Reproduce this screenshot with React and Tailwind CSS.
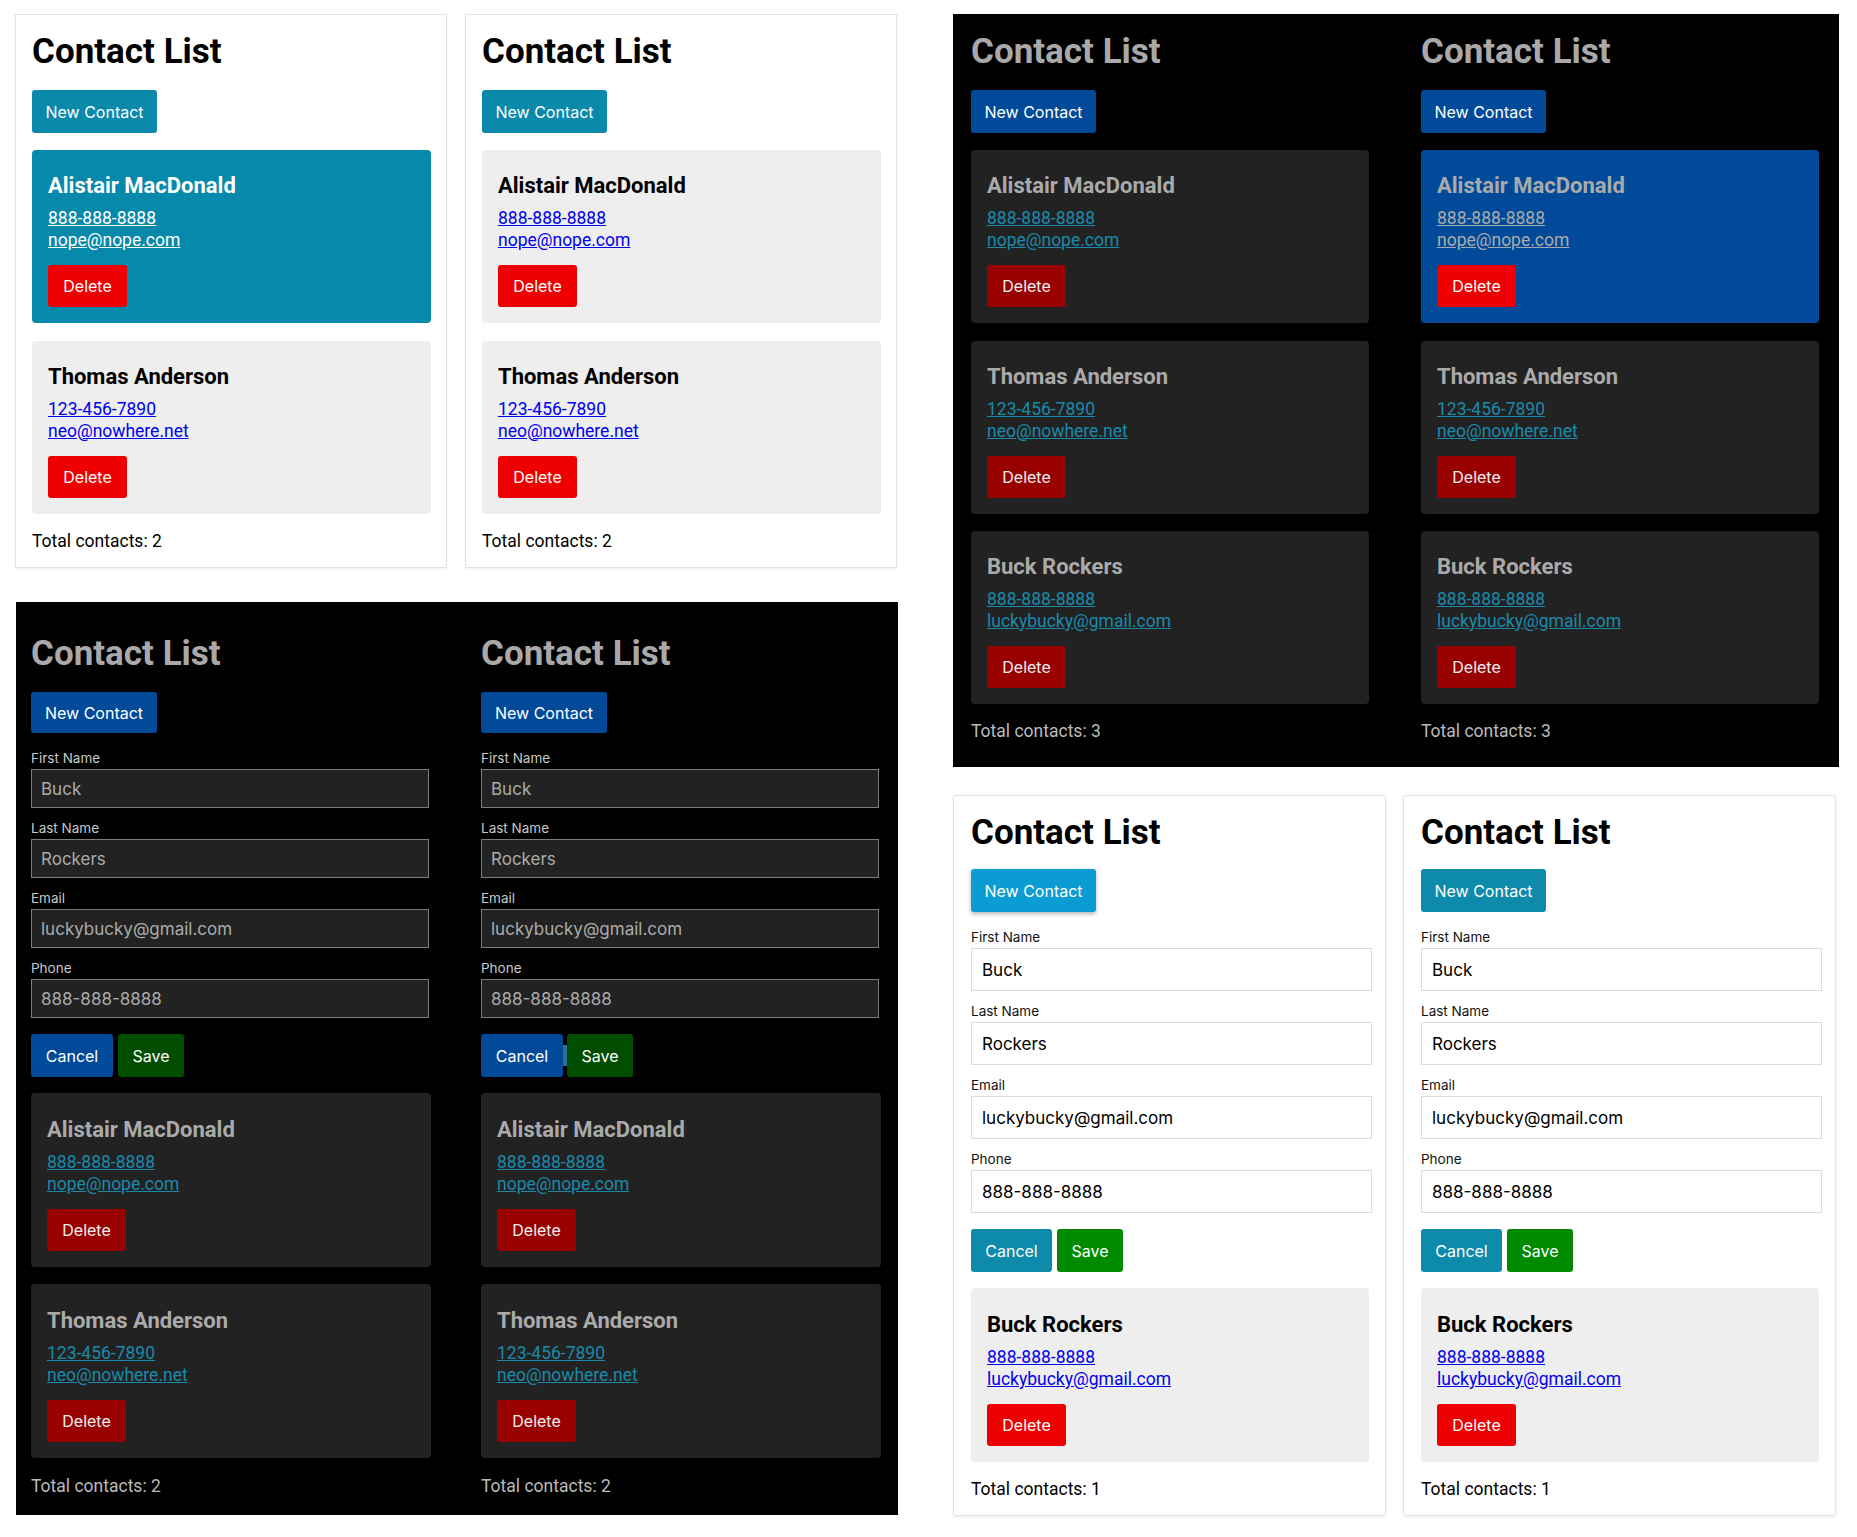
import React from 'react';

// 연락처 목록 화면 네 가지 상태를 한 장에 모아 보여주는 비교 화면
const ALISTAIR = { name: 'Alistair MacDonald', phone: '888-888-8888', email: 'nope@nope.com' };
const THOMAS = { name: 'Thomas Anderson', phone: '123-456-7890', email: 'neo@nowhere.net' };
const BUCK = { name: 'Buck Rockers', phone: '888-888-8888', email: 'luckybucky@gmail.com' };

// 1. 밝은 테마 목록 (왼쪽 위)
const lightList = {
  heading: 'text-[35px] leading-[42px] font-bold text-black',
  newBtn: "mt-[17px] flex items-center justify-center w-[125px] h-[43px] rounded-[3px] bg-[#0b89ab] text-white font-['Inter',sans-serif] text-[16px]",
  list: 'mt-[17px] flex flex-col gap-[17.5px]',
  card: 'w-[399px] rounded-[4px] pl-4 pt-[23px] pb-[16px] flex flex-col items-start bg-[#eeeeee]',
  cardSel: 'w-[399px] rounded-[4px] pl-4 pt-[23px] pb-[16px] flex flex-col items-start bg-[#0789ab]',
  name: 'text-[22px] leading-[25px] font-bold text-black',
  nameSel: 'text-[22px] leading-[25px] font-bold text-white',
  links: 'mt-[9px] flex flex-col items-start text-[17.5px] leading-[22px]',
  link: 'text-[#0000ee] underline',
  linkSel: 'text-white underline',
  del: "mt-[14px] flex items-center justify-center w-[79px] h-[42px] rounded-[3px] bg-[#ee0000] text-white font-['Inter',sans-serif] text-[16px]",
  delSel: "mt-[14px] flex items-center justify-center w-[79px] h-[42px] rounded-[3px] bg-[#ee0000] text-white font-['Inter',sans-serif] text-[16px]",
  total: 'mt-[17px] text-[17.5px] leading-[20px] text-black',
};

// 2. 어두운 테마 (오른쪽 위)
const darkList = {
  heading: 'text-[35px] leading-[42px] font-bold text-[#a9a9a9]',
  newBtn: "mt-[17px] flex items-center justify-center w-[125px] h-[43px] rounded-[3px] bg-[#004a99] text-white font-['Inter',sans-serif] text-[16px]",
  list: 'mt-[17px] flex flex-col gap-[17.5px]',
  card: 'w-[398px] rounded-[4px] pl-4 pt-[23px] pb-[16px] flex flex-col items-start bg-[#222222]',
  cardSel: 'w-[398px] rounded-[4px] pl-4 pt-[23px] pb-[16px] flex flex-col items-start bg-[#004a99]',
  name: 'text-[22px] leading-[25px] font-bold text-[#aaaaaa]',
  nameSel: 'text-[22px] leading-[25px] font-bold text-[#aaaaaa]',
  links: 'mt-[9px] flex flex-col items-start text-[17.5px] leading-[22px]',
  link: 'text-[#1a8aab] underline',
  linkSel: 'text-[#aaaaaa] underline',
  del: "mt-[14px] flex items-center justify-center w-[79px] h-[42px] rounded-[3px] bg-[#990000] text-[#f0f0f0] font-['Inter',sans-serif] text-[16px]",
  delSel: "mt-[14px] flex items-center justify-center w-[79px] h-[42px] rounded-[3px] bg-[#ee0000] text-white font-['Inter',sans-serif] text-[16px]",
  total: 'mt-[17px] text-[17.5px] leading-[20px] text-[#bbbbbb]',
};

// 3. 어두운 테마 + 입력 폼 (왼쪽 아래)
const darkForm = {
  ...darkList,
  newBtn: "mt-[17px] flex items-center justify-center w-[126px] h-[41px] rounded-[3px] bg-[#004a99] text-white font-['Inter',sans-serif] text-[16px]",
  list: 'mt-[16px] flex flex-col gap-[17px]',
  card: 'w-[400px] rounded-[4px] pl-4 pt-[24px] pb-[16px] flex flex-col items-start bg-[#222222]',
  total: 'mt-[18px] text-[17.5px] leading-[20px] text-[#bbbbbb]',
  form: 'mt-[17px] flex flex-col gap-[12px]',
  label: "block font-['Inter',sans-serif] text-[13.5px] leading-[16px] text-[#c8c8c8]",
  input: "mt-[3px] block w-[398px] h-[39px] border border-[#7d7d7d] bg-[#222222] px-[9px] font-['Inter',sans-serif] text-[17px] text-[#ababab] outline-none",
  cancel: "flex items-center justify-center w-[82px] h-[43px] rounded-[3px] bg-[#004a99] text-white font-['Inter',sans-serif] text-[16px]",
  save: "flex items-center justify-center w-[66px] h-[43px] rounded-[3px] bg-[#004d00] text-white font-['Inter',sans-serif] text-[16px]",
};

// 4. 밝은 테마 + 입력 폼 (오른쪽 아래)
const lightForm = {
  ...lightList,
  newBtn: "mt-[15px] flex items-center justify-center w-[125px] h-[43px] rounded-[3px] bg-[#0e8aab] text-white font-['Inter',sans-serif] text-[16px]",
  list: 'mt-[16px] flex flex-col gap-[17px]',
  card: 'w-[398px] rounded-[4px] pl-4 pt-[24px] pb-[16px] flex flex-col items-start bg-[#eeeeee]',
  form: 'mt-[17px] flex flex-col gap-[12px]',
  label: "block font-['Inter',sans-serif] text-[13.5px] leading-[16px] text-[#111111]",
  input: "mt-[3px] block w-[401px] h-[43px] border border-[#dcdcdc] bg-white px-[10px] font-['Inter',sans-serif] text-[17px] text-black outline-none",
  cancel: "flex items-center justify-center w-[81px] h-[43px] rounded-[3px] bg-[#0e8aab] text-white font-['Inter',sans-serif] text-[16px]",
  save: "flex items-center justify-center w-[66px] h-[43px] rounded-[3px] bg-[#008a00] text-white font-['Inter',sans-serif] text-[16px]",
};

const ContactCard = ({ t, c, selected }) => (
  <div className={selected ? t.cardSel : t.card}>
    <h3 className={selected ? t.nameSel : t.name}>{c.name}</h3>
    <div className={t.links}>
      <a href="#" className={selected ? t.linkSel : t.link}>{c.phone}</a>
      <a href="#" className={selected ? t.linkSel : t.link}>{c.email}</a>
    </div>
    <button className={selected ? t.delSel : t.del}>Delete</button>
  </div>
);

const ContactForm = ({ t, sliver }) => (
  <>
    <div className={t.form}>
      {[
        ['First Name', 'Buck'],
        ['Last Name', 'Rockers'],
        ['Email', 'luckybucky@gmail.com'],
        ['Phone', '888-888-8888'],
      ].map(([label, value]) => (
        <div key={label}>
          <label className={t.label}>{label}</label>
          <input readOnly value={value} className={t.input} />
        </div>
      ))}
    </div>
    <div className="mt-[16px] flex">
      <button className={t.cancel}>Cancel</button>
      {sliver ? (
        <span className="w-[4px] h-[21px] self-center bg-[#2c6e9c]" />
      ) : (
        <span className="w-[5px]" />
      )}
      <button className={t.save}>Save</button>
    </div>
  </>
);

const ContactApp = ({ t, contacts, selected, form, sliver, newBtn }) => (
  <div className="flex flex-col items-start">
    <h1 className={t.heading}>Contact List</h1>
    <button className={newBtn || t.newBtn}>New Contact</button>
    {form && <ContactForm t={t} sliver={sliver} />}
    <div className={t.list}>
      {contacts.map((c) => (
        <ContactCard key={c.name} t={t} c={c} selected={selected === c.name} />
      ))}
    </div>
    <p className={t.total}>Total contacts: {contacts.length}</p>
  </div>
);

const App = () => {
  return (
    <div className="w-[1857px] h-[1537px] bg-white flex items-start overflow-hidden font-['Roboto',sans-serif]">
      {/* 왼쪽 열 */}
      <div className="ml-[15px] mt-[14px] flex flex-col">
        <div className="flex gap-[18px]">
          <div className="w-[432px] h-[554px] bg-white border border-[#e3e3e3] shadow-[0_1px_3px_rgba(0,0,0,0.07)] pl-4 pt-[16px]">
            <ContactApp t={lightList} contacts={[ALISTAIR, THOMAS]} selected="Alistair MacDonald" />
          </div>
          <div className="w-[432px] h-[554px] bg-white border border-[#e3e3e3] shadow-[0_1px_3px_rgba(0,0,0,0.07)] pl-4 pt-[16px]">
            <ContactApp t={lightList} contacts={[ALISTAIR, THOMAS]} />
          </div>
        </div>
        <div className="mt-[34px] ml-px w-[882px] h-[913px] bg-black pl-[15px] pt-[31px] flex gap-[50px]">
          <ContactApp t={darkForm} contacts={[ALISTAIR, THOMAS]} form />
          <ContactApp t={darkForm} contacts={[ALISTAIR, THOMAS]} form sliver />
        </div>
      </div>

      {/* 오른쪽 열 */}
      <div className="ml-[55px] mt-[14px] flex flex-col">
        <div className="w-[886px] h-[753px] bg-black pl-[18px] pt-[17px] flex gap-[52px]">
          <ContactApp t={darkList} contacts={[ALISTAIR, THOMAS, BUCK]} />
          <ContactApp t={darkList} contacts={[ALISTAIR, THOMAS, BUCK]} selected="Alistair MacDonald" />
        </div>
        <div className="mt-[28px] flex gap-[17px]">
          <div className="w-[433px] h-[721px] bg-white border border-[#e3e3e3] rounded-[3px] shadow-[0_1px_3px_rgba(0,0,0,0.08)] pl-[17px] pt-[16px]">
            <ContactApp
              t={lightForm}
              contacts={[BUCK]}
              form
              newBtn="mt-[15px] flex items-center justify-center w-[125px] h-[43px] rounded-[3px] bg-[#0a9cd2] text-white font-['Inter',sans-serif] text-[16px] shadow-[0_2px_4px_rgba(0,0,0,0.3)]"
            />
          </div>
          <div className="w-[433px] h-[721px] bg-white border border-[#e3e3e3] rounded-[3px] shadow-[0_1px_3px_rgba(0,0,0,0.08)] pl-[17px] pt-[16px]">
            <ContactApp t={lightForm} contacts={[BUCK]} form />
          </div>
        </div>
      </div>
    </div>
  );
};

export default App;
